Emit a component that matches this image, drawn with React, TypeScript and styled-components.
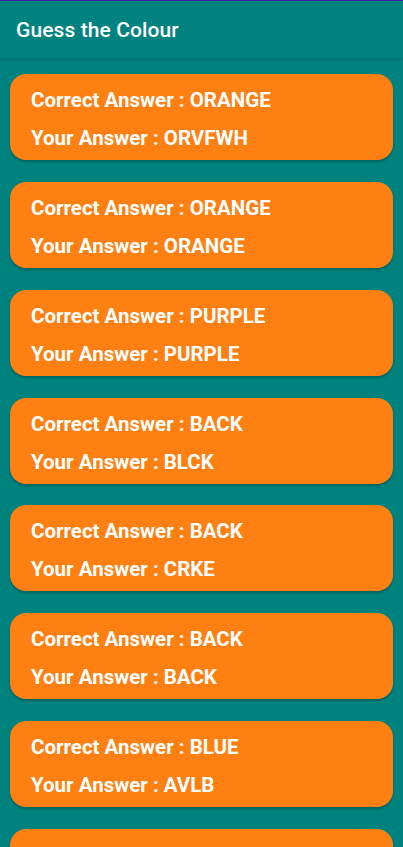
import React from "react";
import styled, { createGlobalStyle } from "styled-components";

const Global = createGlobalStyle`
  html, body { margin: 0; padding: 0; background: #00837E; }
  body { font-family: Roboto, "Noto Sans", sans-serif; overflow: hidden; }
`;

const Screen = styled.div`
  width: 403px;
  height: 847px;
  background: #00837E;
  overflow: hidden;
  display: flex;
  flex-direction: column;
`;

const Toolbar = styled.header`
  height: 58px;
  border-top: 1px solid #3A1FA8;
  box-sizing: border-box;
  background: #00837E;
  display: flex;
  align-items: center;
  padding: 0 16px;
  box-shadow: 0 2px 2px rgba(0, 0, 0, 0.12);
  position: relative;
  z-index: 1;
  flex-shrink: 0;
`;

const Title = styled.h1`
  margin: 0;
  font-family: Roboto, sans-serif;
  font-weight: 500;
  font-size: 21px;
  color: #ffffff;
  letter-spacing: 0.1px;
`;

const List = styled.div`
  display: flex;
  flex-direction: column;
  gap: 21.85px;
  padding: 16px 10px 0;
`;

const Card = styled.div`
  background: #FE7F12;
  border-radius: 16px;
  height: 86px;
  box-sizing: border-box;
  padding: 14px 21px 10px;
  display: flex;
  flex-direction: column;
  gap: 14px;
  box-shadow: 0 2px 3px rgba(0, 0, 0, 0.25);
  flex-shrink: 0;
`;

const Line = styled.div`
  font-family: Roboto, sans-serif;
  font-weight: 700;
  font-size: 20.5px;
  line-height: 24px;
  color: #ffffff;
  white-space: nowrap;
`;

const results = [
  ["ORANGE", "ORVFWH"],
  ["ORANGE", "ORANGE"],
  ["PURPLE", "PURPLE"],
  ["BACK", "BLCK"],
  ["BACK", "CRKE"],
  ["BACK", "BACK"],
  ["BLUE", "AVLB"],
  ["RED", "RED"],
];

export default function App() {
  return (
    <Screen>
      <Global />
      <Toolbar>
        <Title>Guess the Colour</Title>
      </Toolbar>
      <List>
        {results.map(([c, y], i) => (
          <Card key={i}>
            <Line>Correct Answer : {c}</Line>
            <Line>Your Answer : {y}</Line>
          </Card>
        ))}
      </List>
    </Screen>
  );
}
